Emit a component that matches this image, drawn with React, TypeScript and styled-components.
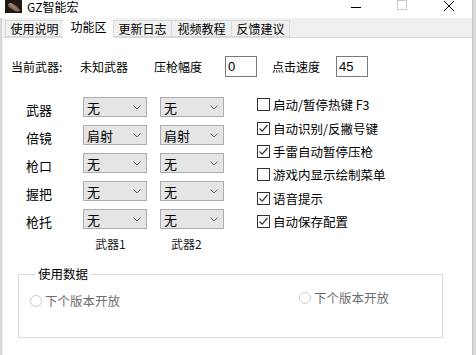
import React from 'react'
import styled, { createGlobalStyle } from 'styled-components'

const GlobalStyle = createGlobalStyle`
	html,
	body {
		margin: 0;
		padding: 0;
		background: #ffffff;
		font-family: "Noto Sans CJK SC", "Liberation Sans", sans-serif;
		font-size: 12px;
		color: #000000;
	}

	* {
		box-sizing: border-box;
	}
`

const Window = styled.div`
	display: flex;
	width: 476px;
	height: 355px;
	overflow: hidden;
	background: #ffffff;
`

const LeftEdge = styled.div`
	width: 3px;
	margin-top: 18px;
	background: #d6d6d6;
	border-right: 1px solid #f4f4f4;
`

const RightEdge = styled.div`
	width: 4px;
	background: #d9d9d9;
	border-left: 1px solid #c4c4c4;
`

const Main = styled.div`
	flex: 1;
	display: flex;
	flex-direction: column;
	min-width: 0;
`

const TitleBar = styled.div`
	height: 18px;
	display: flex;
	align-items: flex-start;
	background: #ffffff;
`

const AppIcon = styled.div`
	width: 17px;
	height: 13px;
	margin-left: 2px;
	background: #1e1a18;
	display: flex;
	align-items: center;
	justify-content: center;
`

const Title = styled.span`
	margin-left: 5px;
	line-height: 14px;
	font-size: 12px;
	color: #000000;
`

const Controls = styled.div`
	margin-left: auto;
	display: flex;
	align-items: flex-start;
`

const ControlButton = styled.div<{ $w: number }>`
	width: ${p => p.$w}px;
	height: 14px;
	display: flex;
	justify-content: center;
	align-items: flex-start;
`

const TabStrip = styled.div`
	height: 20px;
	display: flex;
	align-items: flex-end;
	background: #f0f0f0;
	border-bottom: 1px solid #d9d9d9;
	padding-left: 2px;
`

const Tab = styled.div<{ $active?: boolean; $w: number }>`
	width: ${p => p.$w}px;
	height: ${p => (p.$active ? 21 : 17)}px;
	margin-bottom: ${p => (p.$active ? -1 : 0)}px;
	display: flex;
	align-items: ${p => (p.$active ? 'flex-start' : 'center')};
	justify-content: center;
	padding-top: ${p => (p.$active ? 1 : 0)}px;
	background: ${p => (p.$active ? '#ffffff' : '#f0f0f0')};
	border: 1px solid ${p => (p.$active ? '#ffffff' : '#d9d9d9')};
	border-bottom: ${p => (p.$active ? 'none' : '1px solid #d9d9d9')};
	margin-right: -1px;
	font-size: 12px;
	line-height: 15px;
	color: #000000;
`

const Content = styled.div`
	flex: 1;
	background: #ffffff;
	display: flex;
	flex-direction: column;
	padding-top: 18px;
`

const TopRow = styled.div`
	display: flex;
	align-items: center;
	height: 21px;
	padding-left: 8px;
`

const Cell = styled.span<{ $w: number; $ml?: number }>`
	width: ${p => p.$w}px;
	margin-left: ${p => p.$ml ?? 0}px;
	flex-shrink: 0;
	white-space: nowrap;
	font-size: 12px;
`

const TextBox = styled.div<{ $ml?: number }>`
	width: 32px;
	height: 21px;
	margin-left: ${p => p.$ml ?? 0}px;
	border: 1px solid #7a7a7a;
	background: #ffffff;
	padding-left: 2px;
	line-height: 19px;
	font-family: "Liberation Sans", sans-serif;
	font-size: 13px;
`

const Middle = styled.div`
	display: flex;
	margin-top: 20px;
`

const PartsGrid = styled.div`
	display: grid;
	grid-template-columns: 44px 64px 64px;
	grid-auto-rows: 20px;
	column-gap: 13px;
	row-gap: 8px;
	padding-left: 23px;
	align-items: center;
`

const PartLabel = styled.span`
	font-size: 13px;
	padding-top: 4px;
`

const Select = styled.div`
	height: 20px;
	display: flex;
	align-items: center;
	justify-content: space-between;
	background: #e5e5e5;
	border: 1px solid #acacac;
	padding: 0 5px 0 3px;
	font-size: 13px;
`

const ColumnLabel = styled.span<{ $pl: number }>`
	align-self: start;
	margin-top: -2px;
	padding-left: ${p => p.$pl}px;
	font-size: 12px;
	line-height: 17px;
	color: #1a1a1a;
`

const CheckList = styled.div`
	display: flex;
	flex-direction: column;
	margin-left: 33px;
	margin-top: -4px;
`

const CheckRow = styled.div`
	height: 23.4px;
	display: flex;
	align-items: center;
	gap: 3px;
	font-size: 12.5px;
	white-space: nowrap;
`

const Box = styled.div`
	width: 13px;
	height: 13px;
	border: 1px solid #333333;
	background: #ffffff;
	display: flex;
	align-items: center;
	justify-content: center;
`

const GroupBox = styled.fieldset`
	margin: 10px 29px 0 15px;
	height: 71px;
	border: 1px solid #dcdcdc;
	padding: 9px 0 0 11px;
	display: flex;
`

const Legend = styled.legend`
	padding: 0 2px;
	margin-left: 6px;
	font-size: 12.5px;
	line-height: 14px;
	color: #000000;
`

const RadioOption = styled.div<{ $w?: number; $mt?: number }>`
	width: ${p => (p.$w ? `${p.$w}px` : 'auto')};
	margin-top: ${p => p.$mt ?? 0}px;
	display: flex;
	align-items: flex-start;
	gap: 3px;
	font-size: 12.5px;
	line-height: 16px;
	color: #6d6d6d;
	white-space: nowrap;
`

const RadioDot = styled.div`
	width: 12px;
	height: 12px;
	margin-top: 2px;
	border-radius: 50%;
	border: 1px solid #cccccc;
	background: #ffffff;
`

const tabs = [
	{ label: '使用说明', w: 59 },
	{ label: '功能区', w: 51, active: true },
	{ label: '更新日志', w: 59 },
	{ label: '视频教程', w: 61 },
	{ label: '反馈建议', w: 59 }
]

const parts = [
	{ label: '武器', a: '无', b: '无' },
	{ label: '倍镜', a: '肩射', b: '肩射' },
	{ label: '枪口', a: '无', b: '无' },
	{ label: '握把', a: '无', b: '无' },
	{ label: '枪托', a: '无', b: '无' }
]

const options = [
	{ label: '启动/暂停热键  F3', checked: false },
	{ label: '自动识别/反撇号键', checked: true },
	{ label: '手雷自动暂停压枪', checked: true },
	{ label: '游戏内显示绘制菜单', checked: false },
	{ label: '语音提示', checked: true },
	{ label: '自动保存配置', checked: true }
]

function Chevron() {
	return (
		<svg width='8' height='5' viewBox='0 0 8 5'>
			<path d='M0.5 0.5 L4 4 L7.5 0.5' fill='none' stroke='#666' strokeWidth='1' />
		</svg>
	)
}

function Check() {
	return (
		<svg width='11' height='11' viewBox='0 0 11 11'>
			<path d='M1.5 5.5 L4.2 8.2 L9.5 2' fill='none' stroke='#333' strokeWidth='1.2' />
		</svg>
	)
}

export default function App() {
	return (
		<>
			<GlobalStyle />
			<Window>
				<LeftEdge />
				<Main>
					<TitleBar>
						<AppIcon>
							<svg width='15' height='12' viewBox='0 0 15 12'>
								<path d='M2 3 C4 1 7 2 9 4 C11 6 13 7 14 10 C11 11 8 10 6 8 C4 7 2 6 2 3 Z' fill='#8a6a52' />
								<path d='M4 2 C5 4 7 5 9 7' fill='none' stroke='#c49c7a' strokeWidth='1' />
							</svg>
						</AppIcon>
						<Title>GZ智能宏</Title>
						<Controls>
							<ControlButton $w={46}>
								<svg width='10' height='10' viewBox='0 0 10 10'>
									<path d='M0 7.5 H10' stroke='#000' strokeWidth='1' />
								</svg>
							</ControlButton>
							<ControlButton $w={46}>
								<svg width='11' height='11' viewBox='0 0 11 11'>
									<rect x='0.5' y='0.5' width='9' height='9' fill='none' stroke='#c8c8c8' strokeWidth='1' />
								</svg>
							</ControlButton>
							<ControlButton $w={47}>
								<svg width='12' height='12' viewBox='0 0 12 12'>
									<path d='M1 1 L11 11 M11 1 L1 11' stroke='#000' strokeWidth='1' />
								</svg>
							</ControlButton>
						</Controls>
					</TitleBar>
					<TabStrip>
						{tabs.map(t => (
							<Tab key={t.label} $w={t.w} $active={t.active}>
								{t.label}
							</Tab>
						))}
					</TabStrip>
					<Content>
						<TopRow>
							<Cell $w={69}>当前武器:</Cell>
							<Cell $w={74}>未知武器</Cell>
							<Cell $w={71}>压枪幅度</Cell>
							<TextBox>0</TextBox>
							<Cell $w={64} $ml={15}>点击速度</Cell>
							<TextBox>45</TextBox>
						</TopRow>
						<Middle>
							<PartsGrid>
								{parts.map(p => (
									<React.Fragment key={p.label}>
										<PartLabel>{p.label}</PartLabel>
										<Select>
											{p.a}
											<Chevron />
										</Select>
										<Select>
											{p.b}
											<Chevron />
										</Select>
									</React.Fragment>
								))}
								<span />
								<ColumnLabel $pl={12}>武器1</ColumnLabel>
								<ColumnLabel $pl={11}>武器2</ColumnLabel>
							</PartsGrid>
							<CheckList>
								{options.map(o => (
									<CheckRow key={o.label}>
										<Box>{o.checked && <Check />}</Box>
										{o.label}
									</CheckRow>
								))}
							</CheckList>
						</Middle>
						<GroupBox>
							<Legend>使用数据</Legend>
							<RadioOption $w={269} $mt={3}>
								<RadioDot />
								下个版本开放
							</RadioOption>
							<RadioOption>
								<RadioDot />
								下个版本开放
							</RadioOption>
						</GroupBox>
					</Content>
				</Main>
				<RightEdge />
			</Window>
		</>
	)
}
